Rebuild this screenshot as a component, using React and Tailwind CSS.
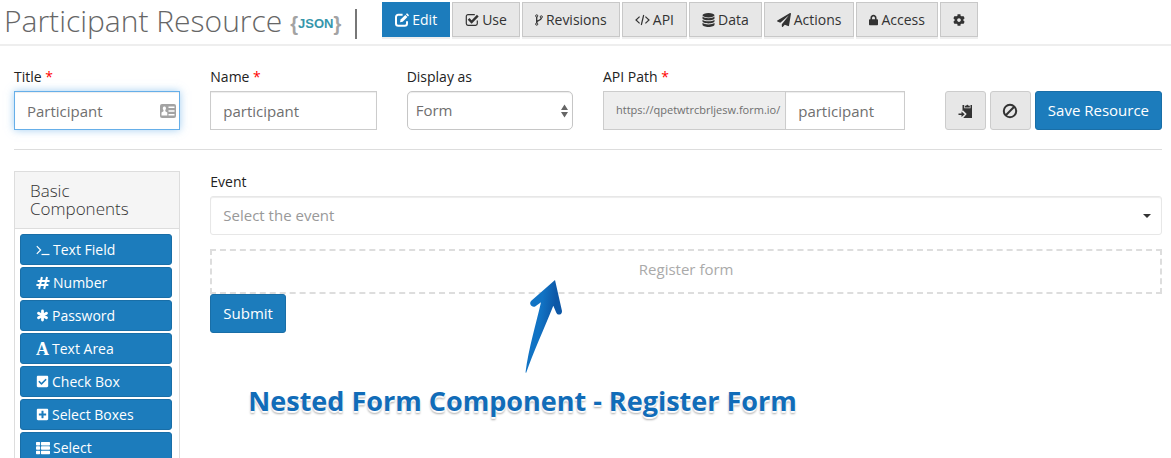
import React from 'react';
import {
  FaCheckSquare,
  FaCog,
  FaLock,
  FaPaperPlane,
  FaPlusSquare,
  FaThList,
} from 'react-icons/fa';

const EditIcon = () => (
  <svg viewBox="0 0 14 14" className="size-[14px]" fill="none" stroke="currentColor" aria-hidden="true">
    <path d="M7.6 1.8H3.2A2.2 2.2 0 0 0 1 4v6.6a2.2 2.2 0 0 0 2.2 2.2h6.6a2.2 2.2 0 0 0 2.2-2.2V8.2" strokeWidth="2" />
    <path d="M5 9.3l.6-2.7 4.7-4.7 2.1 2.1-4.7 4.7z" fill="currentColor" stroke="none" />
    <path d="M10.9 1.3l.8-.8a.5.5 0 0 1 .7 0l1.4 1.4a.5.5 0 0 1 0 .7l-.8.8z" fill="currentColor" stroke="none" />
  </svg>
);

const UseIcon = () => (
  <svg viewBox="0 0 14 14" className="size-[14px]" fill="none" stroke="currentColor" aria-hidden="true">
    <path d="M9.8 1.7H3A1.7 1.7 0 0 0 1.3 3.4v7.2A1.7 1.7 0 0 0 3 12.3h7.6a1.7 1.7 0 0 0 1.7-1.7V7.4" strokeWidth="1.2" />
    <path d="M3.6 5.9l3 3.1 6.2-6.4" strokeWidth="2.4" />
  </svg>
);

const BranchIcon = () => (
  <svg viewBox="0 0 8 12" className="h-[12px] w-[8px]" fill="none" stroke="currentColor" aria-hidden="true">
    <circle cx="1.700" cy="1.900" r="1.100" strokeWidth="1" />
    <circle cx="1.700" cy="10.100" r="1.100" strokeWidth="1" />
    <circle cx="6.300" cy="2.900" r="1.100" strokeWidth="1" />
    <path d="M1.700 3v6M6.300 4c0 2.800-4.600 2-4.600 4.400" strokeWidth="1.300" />
  </svg>
);

const CodeIcon = () => (
  <svg viewBox="0 0 15 12" className="h-[12px] w-[15px]" fill="none" stroke="currentColor" strokeWidth="1.2" aria-hidden="true">
    <path d="M4.6 2.6L1 6l3.6 3.4M10.4 2.6L14 6l-3.6 3.4M8.7 1L6.3 11" />
  </svg>
);

const DataIcon = () => (
  <svg viewBox="0 0 12 14" className="h-[14px] w-[13px]" fill="currentColor" aria-hidden="true">
    <ellipse cx="6" cy="2.2" rx="6" ry="2.2" />
    <path d="M0 3.6c1.2 1.2 3.4 1.6 6 1.6s4.8-.4 6-1.6v1.6c0 1.2-2.7 2.1-6 2.1S0 6.4 0 5.2z" />
    <path d="M0 6.7c1.2 1.2 3.4 1.6 6 1.6s4.8-.4 6-1.6v1.6c0 1.2-2.7 2.1-6 2.1S0 9.5 0 8.3z" />
    <path d="M0 9.8c1.2 1.2 3.4 1.6 6 1.6s4.8-.4 6-1.6v2c0 1.2-2.7 2.2-6 2.2s-6-1-6-2.2z" />
  </svg>
);

const TerminalIcon = () => (
  <svg viewBox="0 0 14 12" className="h-[12px] w-[14px]" fill="none" stroke="currentColor" aria-hidden="true">
    <path d="M.8 2.2L4.6 6 .8 9.8" strokeWidth="1.2" />
    <path d="M5.500 10.500h8" strokeWidth="1.200" />
  </svg>
);

const HashIcon = () => (
  <svg viewBox="0 0 14 14" className="size-[14px]" fill="none" stroke="currentColor" strokeWidth="2" aria-hidden="true">
    <path d="M5.900 1L3.100 13M11 1L8.200 13M1.600 4.900h12M.4 9.100h12" />
  </svg>
);

const AsteriskIcon = () => (
  <svg viewBox="0 0 13 13" className="size-[13px]" fill="none" stroke="currentColor" strokeWidth="2.800" strokeLinecap="round" aria-hidden="true">
    <path d="M6.500 1.900v9.200M2.500 4.200l8 4.600M2.500 8.800l8-4.600" />
  </svg>
);

const LetterIcon = () => (
  <span aria-hidden="true" className="w-[13px] text-center font-['Liberation_Serif',serif] text-[18px] font-bold leading-4">
    A
  </span>
);

const PasteIcon = () => (
  <svg viewBox="0 0 15 16" className="h-[16px] w-[15px]" fill="currentColor" aria-hidden="true">
    <path d="M4.500 2h1.700v3.300h6.300V2H14v13H5.200l3.500-3.900-3.500-3.700-.7.500z" />
    <path d="M6.900 4.500V2.700h1.300a1.200 1.200 0 0 1 2.300 0h1.300v1.800z" />
    <path d="M.5 10.400h3V8.600l3.200 2.600-3.200 2.700v-1.800h-3z" />
  </svg>
);

const BanIcon = () => (
  <svg viewBox="0 0 16 16" className="size-[16px]" fill="none" stroke="currentColor" strokeWidth="2" aria-hidden="true">
    <circle cx="8" cy="8" r="6.200" />
    <path d="M3.800 12.200l8.400-8.400" />
  </svg>
);

const ContactCardIcon = () => (
  <svg viewBox="0 0 16 14" className="pointer-events-none absolute right-1 h-[14px] w-[16px]" aria-hidden="true">
    <rect width="16" height="14" rx="2" fill="#a3a3a3" />
    <path d="M8.500 2.500h6v1.500h-6zM8.500 6.200h6v1.500h-6zM8.500 10h6v1.500h-6z" fill="#fff" />
    <path d="M4.500 2.500a1.500 1.900 0 0 1 .8 3.500v1.300L7.300 8.600V11.500H1.500V8.600l2-1.300V6a1.500 1.900 0 0 1 1-3.500z" fill="#fff" />
  </svg>
);

const tabs = [
  { label: 'Edit', icon: <EditIcon />, active: true },
  { label: 'Use', icon: <UseIcon /> },
  { label: 'Revisions', icon: <BranchIcon /> },
  { label: 'API', icon: <CodeIcon /> },
  { label: 'Data', icon: <DataIcon /> },
  { label: 'Actions', icon: <FaPaperPlane className="size-[14px]" /> },
  { label: 'Access', icon: <FaLock className="h-[12px] w-[9px]" /> },
];

const components = [
  { label: 'Text Field', icon: <TerminalIcon /> },
  { label: 'Number', icon: <HashIcon /> },
  { label: 'Password', icon: <AsteriskIcon /> },
  { label: 'Text Area', icon: <LetterIcon /> },
  { label: 'Check Box', icon: <FaCheckSquare className="size-[13px]" /> },
  { label: 'Select Boxes', icon: <FaPlusSquare className="size-[13px]" /> },
  { label: 'Select', icon: <FaThList className="size-[14px]" /> },
];

const tabBase = 'flex h-[35px] items-center gap-[3px] border px-3 text-sm shadow-[0_2px_0_#eee]';
const tabPlain = 'border-[#c8c8c8] bg-[#e7e7e7] text-[#333]';
const tabActive = 'border-[#1c7cbc] bg-[#1c7cbc] text-white';
const field = 'h-[39px] w-full border border-[#ccc] bg-white px-3 text-[15px] text-[#6f6f6f] shadow-[inset_0_1px_1px_rgba(0,0,0,0.075)] outline-none';
const primary = 'rounded-[3px] border border-[#196ea7] bg-[#1c7cbc] text-white';
const iconButton = 'flex h-[39px] w-[41px] items-center justify-center rounded-[3px] border border-[#ccc] bg-[#e7e7e7] text-[#333]';

function Label({ htmlFor, required, children }) {
  return (
    <label htmlFor={htmlFor} className="mb-1 block text-sm leading-5 text-[#222]">
      {children}
      {required && <span className="text-[#f00]"> *</span>}
    </label>
  );
}

function Header() {
  return (
    <header className="flex h-[46px] items-start border-b-2 border-[#eee] pl-1">
      <h1 className="flex h-10 items-center whitespace-nowrap text-[30px] font-light text-[#666]">
        Participant Resource
        <span className="ml-2 mt-2 flex items-center font-['Liberation_Sans',Arial,sans-serif] font-bold">
          <span className="text-[20px] leading-5 text-[#a3a3a3]">{'{'}</span>
          <span className="text-[13px] leading-5 text-[#3696ab]">JSON</span>
          <span className="text-[20px] leading-5 text-[#a3a3a3]">{'}'}</span>
        </span>
        <span className="ml-[14px] mt-2 h-[30px] w-[2px] bg-[#777]" />
      </h1>
      <nav className="ml-[25px] mt-[2px] flex gap-[2px]">
        {tabs.map((t) => (
          <button key={t.label} type="button" className={`${tabBase} ${t.active ? tabActive : tabPlain}`}>
            {t.icon}
            {t.label}
          </button>
        ))}
        <button type="button" aria-label="Settings" className={`${tabBase} ${tabPlain}`}>
          <FaCog className="size-[12px]" />
        </button>
      </nav>
    </header>
  );
}

function Settings() {
  return (
    <form className="grid grid-cols-12 gap-x-[30px] border-b border-[#ddd] pb-[19px] pt-[21px]">
      <div className="col-span-2">
        <Label htmlFor="title" required>Title</Label>
        <div className="relative flex items-center">
          <input
            id="title"
            defaultValue="Participant"
            className="h-[39px] w-full border border-[#66afe9] bg-white px-3 text-[15px] text-[#6f6f6f] shadow-[inset_0_1px_1px_rgba(0,0,0,0.075),0_0_8px_rgba(102,175,233,0.6)] outline-none"
          />
          <ContactCardIcon />
        </div>
      </div>
      <div className="col-span-2">
        <Label htmlFor="name" required>Name</Label>
        <input id="name" defaultValue="participant" className={field} />
      </div>
      <div className="col-span-2">
        <Label htmlFor="display">Display as</Label>
        <div className="relative flex items-center">
          <select
            id="display"
            className="h-[39px] w-full appearance-none rounded-[5px] border border-[#c6c6c6] bg-white px-2 text-[15px] text-[#6f6f6f] shadow-[inset_0_1px_1px_rgba(0,0,0,0.075)]"
          >
            <option>Form</option>
            <option>Wizard</option>
          </select>
          <svg viewBox="0 0 7 14" className="pointer-events-none absolute right-[5px] h-[14px] w-[7px]" fill="#666" aria-hidden="true">
            <path d="M3.500 .5L7 6H0zM3.500 13.500L0 8h7z" />
          </svg>
        </div>
      </div>
      <div className="col-span-6 flex items-end justify-between">
        <div className="w-[302px]">
          <Label htmlFor="path" required>API Path</Label>
          <div className="flex">
            <span className="flex h-[39px] items-center border border-r-0 border-[#ccc] bg-[#eee] pl-3 pr-[5px] text-[11px] text-[#6f6f6f]">
              https://qpetwtrcbrljesw.form.io/
            </span>
            <input id="path" defaultValue="participant" className={`${field} min-w-0 flex-1`} />
          </div>
        </div>
        <div className="flex gap-1">
          <button type="button" aria-label="Paste" className={iconButton}>
            <PasteIcon />
          </button>
          <button type="button" aria-label="Cancel" className={iconButton}>
            <BanIcon />
          </button>
          <button type="button" className={`${primary} h-[39px] whitespace-nowrap px-3 text-[15px]`}>Save Resource</button>
        </div>
      </div>
    </form>
  );
}

function Sidebar() {
  return (
    <aside className="col-span-2 border border-[#ddd]">
      <h2 className="border-b border-[#ddd] bg-[#f5f5f5] px-[15px] py-[10px] text-[17px] font-light leading-[18px] text-[#333]">
        Basic Components
      </h2>
      <div className="flex flex-col gap-[2px] py-[5px] pl-[5px] pr-[7px]">
        {components.map((c) => (
          <button key={c.label} type="button" className={`${primary} flex h-[31px] items-center gap-[3px] px-[15px] text-sm`}>
            {c.icon}
            {c.label}
          </button>
        ))}
      </div>
    </aside>
  );
}

function Annotation() {
  return (
    <div className="pointer-events-none absolute left-[38px] top-[107px]">
      <svg viewBox="0 0 42 96" className="ml-[276px] h-[96px] w-[42px]" aria-hidden="true">
        <defs>
          <linearGradient id="arrow" x1="0.2" y1="0.3" x2="0.9" y2="0.5">
            <stop offset="0.3" stopColor="#1173c4" />
            <stop offset="0.8" stopColor="#0d57a6" />
          </linearGradient>
        </defs>
        <path
          d="M31 2L38 33c.3 3.800-4.300 5-5.700 1.700L29.300 27.700C20 51 9 75 2.200 94.700L1.500 94.500C4.500 71 12.500 44 17 24.300L11.500 28.200C8 30.300 4.300 25.600 7.300 22.800z"
          fill="url(#arrow)"
        />
      </svg>
      <p className="mt-[9px] whitespace-nowrap text-[27px] font-bold leading-9 text-[#116cb8] [text-shadow:0_0_2px_#fff,0_2px_1px_#fff,0_3px_2px_#aaa]">
        Nested Form Component - Register Form
      </p>
    </div>
  );
}

function Preview() {
  return (
    <main className="relative col-span-10 pt-px">
      <Label htmlFor="event">Event</Label>
      <div className="relative flex items-center">
        <select
          id="event"
          className="h-[39px] w-full appearance-none rounded-[3px] border border-[#e7e7e7] bg-white px-3 text-[15px] text-[#999] shadow-[inset_0_1px_1px_rgba(0,0,0,0.075)]"
        >
          <option>Select the event</option>
        </select>
        <svg viewBox="0 0 8 4" className="pointer-events-none absolute right-[11px] h-[4px] w-[8px]" fill="#333" aria-hidden="true">
          <path d="M0 0h8L4 4z" />
        </svg>
      </div>
      <div className="mt-[14px] flex h-[45px] items-center justify-center border-2 border-dashed border-[#ddd] pb-1 text-[15px] text-[#aaa]">
        Register form
      </div>
      <button type="button" className={`${primary} h-[39px] px-3 text-[15px]`}>Submit</button>
      <Annotation />
    </main>
  );
}

export default function App() {
  return (
    <div className="h-screen overflow-hidden bg-white font-['Open_Sans','Noto_Sans',sans-serif]">
      <Header />
      <div className="pl-[14px] pr-[9px]">
        <Settings />
        <div className="grid grid-cols-12 gap-x-[30px] pt-[21px]">
          <Sidebar />
          <Preview />
        </div>
      </div>
    </div>
  );
}
